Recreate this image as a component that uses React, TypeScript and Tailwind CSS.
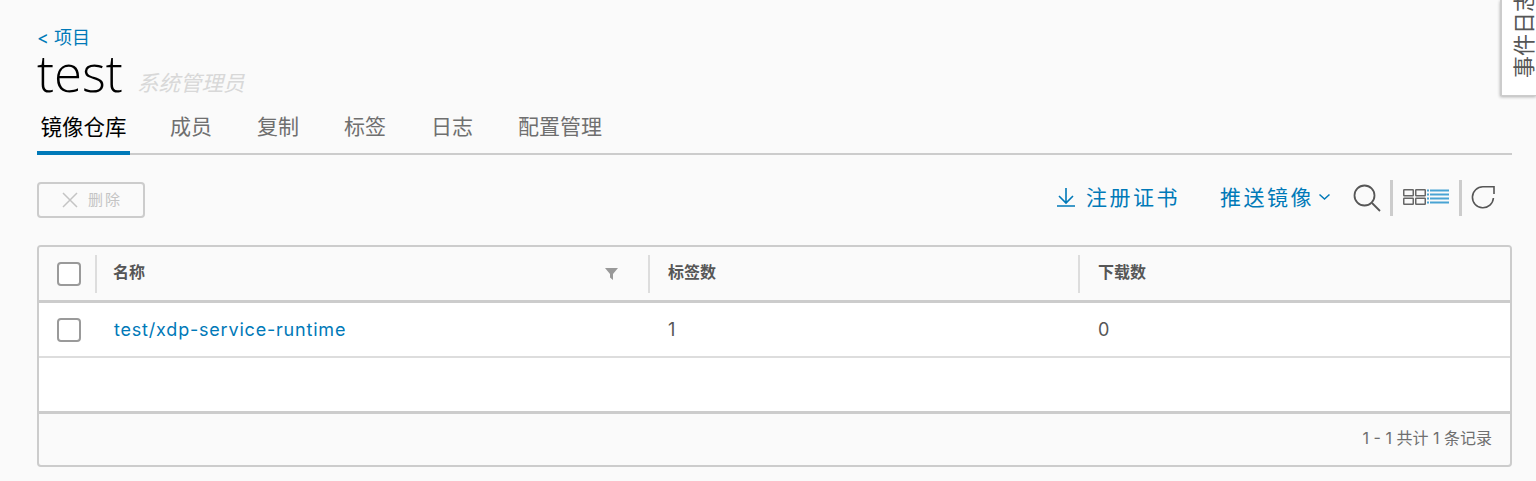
import { X } from "lucide-react";

const cjk = "font-['Inter','Noto_Sans_CJK_SC',sans-serif]";
const tabs = ["成员", "复制", "标签", "日志", "配置管理"];

function Checkbox() {
  return <div className="h-[24px] w-[24px] rounded-[4px] border-2 border-[#9a9a9a] bg-white" />;
}

function DownloadIcon() {
  return (
    <svg width="20" height="20" viewBox="0 0 20 20" fill="none" stroke="#0079b8" strokeWidth="1.6" className="mb-[2px]">
      <path d="M1 19h18M10 1v15M3 9l7 7 7-7" />
    </svg>
  );
}

function SearchIcon() {
  return (
    <svg width="28" height="28" viewBox="0 0 28 28" fill="none" stroke="#565656" strokeWidth="1.8" className="ml-[22px]">
      <circle cx="11.5" cy="11.5" r="10" />
      <path d="M19 19l8 8" />
    </svg>
  );
}

function GridListIcon() {
  return (
    <svg width="46" height="16" viewBox="0 0 46 16" fill="none" className="mb-[3px] ml-[10px]">
      <g stroke="#666" strokeWidth="1.5">
        <rect x="0.75" y="0.75" width="9.5" height="6" rx="0.5" />
        <rect x="12.75" y="0.75" width="9.5" height="6" rx="0.5" />
        <rect x="0.75" y="9.25" width="9.5" height="6" rx="0.5" />
        <rect x="12.75" y="9.25" width="9.5" height="6" rx="0.5" />
      </g>
      <path d="M24 1.5h2M27 1.5h19M24 5.5h2M27 5.5h19M24 9.5h2M27 9.5h19M24 13.5h2M27 13.5h19" stroke="#49a3d3" strokeWidth="1.8" />
    </svg>
  );
}

function RefreshIcon() {
  return (
    <svg width="24" height="24" viewBox="0 0 24 24" fill="none" stroke="#565656" strokeWidth="1.6" className="mb-[2px] ml-[9px] mr-[17px]">
      <path d="M12 1.8A10.5 10.5 0 1 0 22.4 13" />
      <path d="M12 1.8h11V9" />
    </svg>
  );
}

export default function App() {
  return (
    <div className={`relative h-[481px] w-[1536px] overflow-hidden bg-[#fafafa] ${cjk}`}>
      <div className="absolute right-0 top-0 h-[96px] w-[36px] border-b border-l-2 border-[#ccc] bg-white shadow-[0_1px_3px_rgba(0,0,0,0.3)]">
        <span className="absolute left-[11px] top-[78px] origin-top-left -rotate-90 whitespace-nowrap text-[22px] leading-[22px] text-[#565656]">
          事件日志
        </span>
      </div>

      <div className="ml-[37px] w-[1475px] pt-[28px]">
        <a className="block h-[20px] text-[18px] leading-[20px] text-[#0079b8]">&lt; 项目</a>
        <div className="flex h-[50px] items-end">
          <h1 className="mb-[1px] font-['Open_Sans','Noto_Sans_CJK_SC',sans-serif] text-[51px] font-light leading-[50px] text-black">test</h1>
          <span className="mb-[2px] ml-[14px] text-[21.5px] italic leading-[26px] text-[#d8d8d8]">系统管理员</span>
        </div>

        <div className="mt-[14px] flex h-[43px] items-stretch border-b-2 border-[#ccc]">
          <div className="mb-[-2px] flex w-[93px] items-center justify-center border-b-4 border-[#0079b8] pb-[8px] text-[21.5px] text-black">镜像仓库</div>
          <div className="ml-[40px] flex gap-[45px]">
            {tabs.map((t) => (
              <div key={t} className="flex items-center pb-[11px] text-[21px] text-[#6f6f6f]">{t}</div>
            ))}
          </div>
        </div>

        <div className="mt-[27px] flex h-[36px] items-start justify-between">
          <button className="flex h-[36px] w-[108px] items-center gap-[10px] rounded-[4px] border-2 border-[#ccc] pl-[23px] text-[15px] tracking-[2px] text-[#c4c4c4]">
            <svg width="16" height="16" viewBox="0 0 16 16" stroke="#c4c4c4" strokeWidth="1.5"><path d="M1 1l14 14M15 1L1 15" /></svg>
            删除
          </button>
          <div className="mt-[-2px] flex h-[36px] items-center text-[21px] tracking-[2.5px] text-[#0079b8]">
            <DownloadIcon />
            <span className="ml-[10px]">注册证书</span>
            <span className="ml-[40px]">推送镜像</span>
            <svg width="13" height="8" viewBox="0 0 13 8" fill="none" stroke="#0079b8" strokeWidth="1.5" className="mb-[3px] ml-[4px]"><path d="M1.5 1.5L6.5 6l5-4.5" /></svg>
            <SearchIcon />
            <div className="ml-[9px] h-[36px] w-[3px] bg-[#ccc]" />
            <GridListIcon />
            <div className="ml-[10px] h-[36px] w-[3px] bg-[#ccc]" />
            <RefreshIcon />
          </div>
        </div>

        <div className="mt-[27px] h-[222px] overflow-hidden rounded-[4px] border-2 border-[#ccc]">
          <div className="flex h-[56px] items-center border-b-[3px] border-[#ccc] bg-[#fafafa] text-[16px] font-bold text-[#565656]">
            <div className="flex w-[58px] items-center justify-between pl-[18px]">
              <Checkbox />
              <div className="h-[38px] w-[2px] bg-[#ddd]" />
            </div>
            <div className="flex h-[38px] w-[553px] items-center justify-between border-r-2 border-[#ddd] pl-[16px] pr-[30px]">
              <span className="pb-[3px]">名称</span>
              <svg width="13" height="12" viewBox="0 0 13 12"><path d="M0 0h13L8 6v6L5 9.5V6z" fill="#999" /></svg>
            </div>
            <div className="flex h-[38px] w-[430px] items-center border-r-2 border-[#ddd] pb-[3px] pl-[18px]">标签数</div>
            <div className="pb-[3px] pl-[18px]">下载数</div>
          </div>

          <div className="flex h-[55px] items-center border-b-2 border-[#ddd] bg-white text-[18px] text-[#565656]">
            <div className="w-[58px] pl-[18px]"><Checkbox /></div>
            <a className="w-[553px] pl-[17px] tracking-[0.8px] text-[#0079b8]">test/xdp-service-runtime</a>
            <div className="w-[430px] pl-[18px]">1</div>
            <div className="pl-[18px]">0</div>
          </div>

          <div className="h-[56px] border-b-[3px] border-[#ccc] bg-white" />

          <div className="flex h-[51px] items-center justify-end pb-[3px] pr-[18px] text-[16px] text-[#6f6f6f]">1 - 1 共计 1 条记录</div>
        </div>
      </div>
    </div>
  );
}
